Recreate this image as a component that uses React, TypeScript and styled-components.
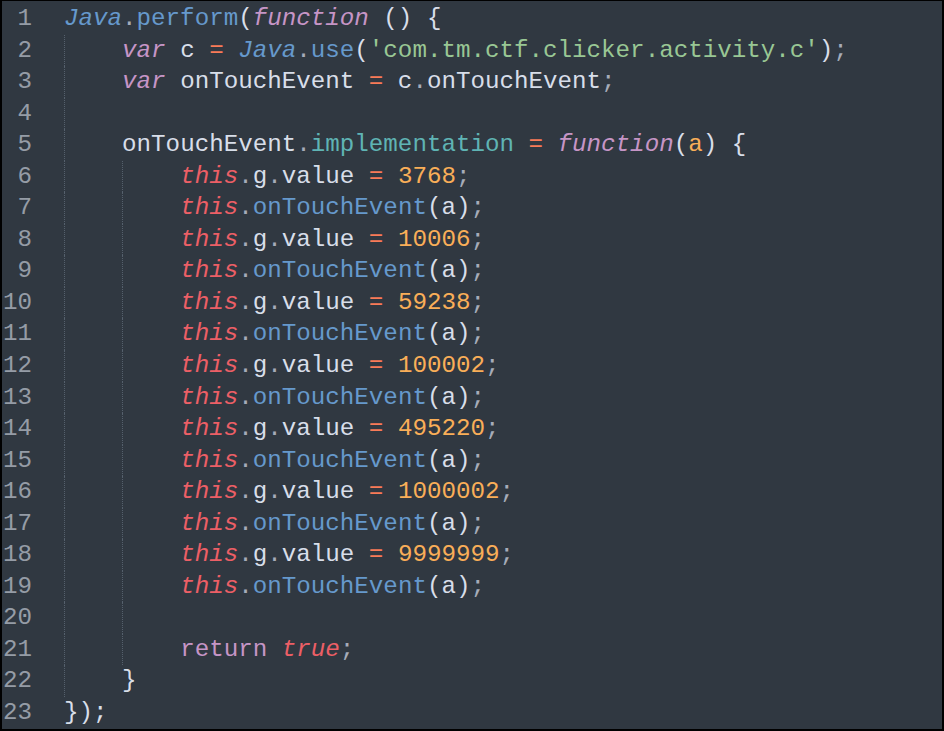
import React from "react";
import styled, { createGlobalStyle } from "styled-components";

const Global = createGlobalStyle`
  html, body { margin: 0; padding: 0; background: #000; }
  #root { width: 944px; height: 731px; }
`;

type Kind = "plain" | "kw" | "ret" | "this" | "cls" | "fn" | "prop" | "op" | "num" | "param" | "str" | "punc" | "bool";

const colors: Record<Kind, string> = {
  plain: "#d8dee9",
  kw: "#c695c6",
  ret: "#c695c6",
  this: "#ec5f66",
  bool: "#ec5f66",
  cls: "#6699cc",
  fn: "#6699cc",
  prop: "#5fb4b4",
  op: "#f97b58",
  num: "#f9ae58",
  param: "#f9ae58",
  str: "#99c794",
  punc: "#a6acb9",
};

const italic: Partial<Record<Kind, boolean>> = { kw: true, this: true, bool: true, cls: true };

type Tok = [string, Kind];
interface Line { indent: number; toks: Tok[] }

const valueLine = (n: string): Line => ({
  indent: 2,
  toks: [["this", "this"], [".", "punc"], ["g", "plain"], [".", "punc"], ["value ", "plain"], ["=", "op"], [" ", "plain"], [n, "num"], [";", "punc"]],
});
const callLine: Line = {
  indent: 2,
  toks: [["this", "this"], [".", "punc"], ["onTouchEvent", "fn"], ["(", "plain"], ["a", "plain"], [")", "plain"], [";", "punc"]],
};

const lines: Line[] = [
  { indent: 0, toks: [["Java", "cls"], [".", "punc"], ["perform", "fn"], ["(", "plain"], ["function", "kw"], [" () {", "plain"]] },
  { indent: 1, toks: [["var", "kw"], [" c ", "plain"], ["=", "op"], [" ", "plain"], ["Java", "cls"], [".", "punc"], ["use", "fn"], ["(", "plain"], ["'com.tm.ctf.clicker.activity.c'", "str"], [")", "plain"], [";", "punc"]] },
  { indent: 1, toks: [["var", "kw"], [" onTouchEvent ", "plain"], ["=", "op"], [" c", "plain"], [".", "punc"], ["onTouchEvent", "plain"], [";", "punc"]] },
  { indent: 1, toks: [] },
  { indent: 1, toks: [["onTouchEvent", "plain"], [".", "punc"], ["implementation", "prop"], [" ", "plain"], ["=", "op"], [" ", "plain"], ["function", "kw"], ["(", "plain"], ["a", "param"], [") {", "plain"]] },
  valueLine("3768"),
  callLine,
  valueLine("10006"),
  callLine,
  valueLine("59238"),
  callLine,
  valueLine("100002"),
  callLine,
  valueLine("495220"),
  callLine,
  valueLine("1000002"),
  callLine,
  valueLine("9999999"),
  callLine,
  { indent: 2, toks: [] },
  { indent: 2, toks: [["return", "ret"], [" ", "plain"], ["true", "bool"], [";", "punc"]] },
  { indent: 1, toks: [["}", "plain"]] },
  { indent: 0, toks: [["});", "plain"]] },
];

const Frame = styled.div`
  box-sizing: border-box;
  width: 944px;
  height: 731px;
  border-style: solid;
  border-color: #000;
  border-width: 1px 2px 2px 2px;
  background: #303841;
  padding-top: 2px;
  display: flex;
  flex-direction: column;
  font-family: "Liberation Mono", "DejaVu Sans Mono", monospace;
  font-size: 24.2px;
  line-height: 31.55px;
  overflow: hidden;
`;

const Row = styled.div`
  display: flex;
  height: 31.55px;
  white-space: pre;
`;

const Gutter = styled.span`
  width: 30px;
  flex: none;
  text-align: right;
  color: #959ca6;
  margin-right: 32px;
`;

const Code = styled.span`
  display: flex;
  flex: 1;
`;

const Indent = styled.span`
  display: inline-block;
  width: 58.08px;
  flex: none;
  box-sizing: border-box;
  border-left: 1px dotted #55606c;
`;

const Token = styled.span<{ $kind: Kind }>`
  color: ${(p) => colors[p.$kind]};
  font-style: ${(p) => (italic[p.$kind] ? "italic" : "normal")};
`;

export default function App() {
  return (
    <>
      <Global />
      <Frame>
        {lines.map((line, i) => (
          <Row key={i}>
            <Gutter>{i + 1}</Gutter>
            <Code>
              {Array.from({ length: line.indent }).map((_, k) => (
                <Indent key={k} />
              ))}
              <span>
                {line.toks.map(([t, k], j) => (
                  <Token key={j} $kind={k}>
                    {t}
                  </Token>
                ))}
              </span>
            </Code>
          </Row>
        ))}
      </Frame>
    </>
  );
}
